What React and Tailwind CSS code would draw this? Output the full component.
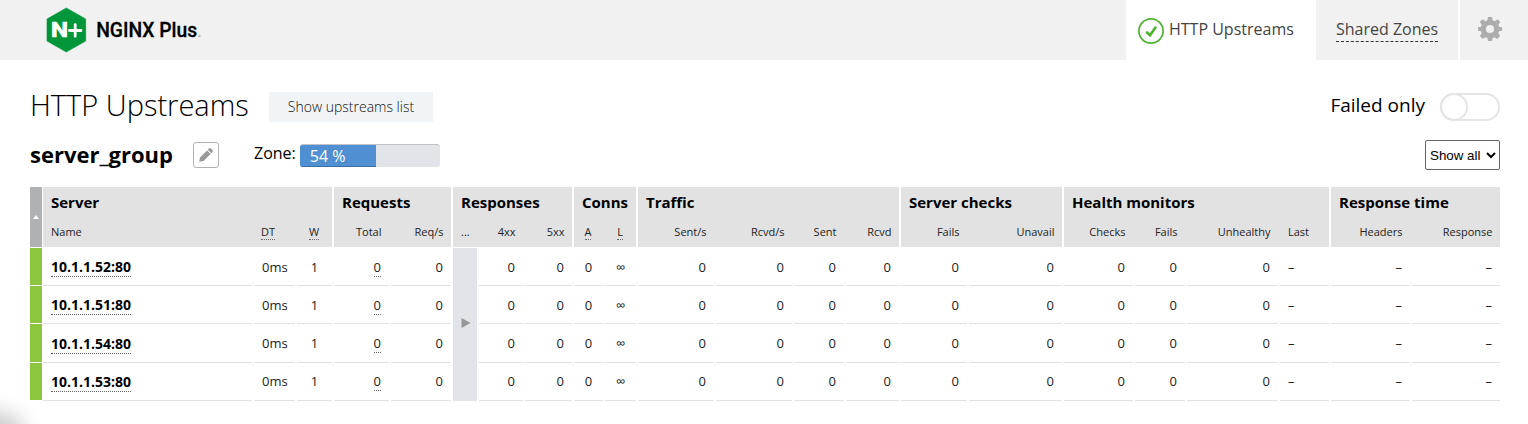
const groups = [
  { title: "Server", cols: [["Name", 209, "l"], ["DT", 41, "l", 1], ["W", 35, "c", 1]] },
  { title: "Requests", cols: [["Total", 55, "r"], ["Req/s", 60, "r"]] },
  { title: "Responses", cols: [["...", 24, "l"], ["4xx", 44, "r"], ["5xx", 47, "r"]] },
  { title: "Conns", cols: [["A", 29, "c", 1], ["L", 31, "c", 1]] },
  { title: "Traffic", cols: [["Sent/s", 76, "r"], ["Rcvd/s", 76, "r"], ["Sent", 50, "r"], ["Rcvd", 53, "r"]] },
  { title: "Server checks", cols: [["Fails", 66, "r"], ["Unavail", 93, "r"]] },
  { title: "Health monitors", cols: [["Checks", 69, "r"], ["Fails", 50, "r"], ["Unhealthy", 91, "r"], ["Last", 49, "l"]] },
  { title: "Response time", cols: [["Headers", 79, "r"], ["Response", 88, "r"]] },
];

const servers = ["10.1.1.52:80", "10.1.1.51:80", "10.1.1.54:80", "10.1.1.53:80"];

const rowHeights = ["h-[38px]", "h-[38px]", "h-[39px]", "h-[38px]"];
const textTops = ["pt-[10px]", "pt-[10px]", "pt-[10px]", "pt-[9px]"];
const nameTops = ["pt-[10px]", "pt-[10px]", "pt-[11px]", "pt-[10px]"];

const align = { l: "justify-start", r: "justify-end", c: "justify-center" };

const leftColumns = ["server", "0ms", "1", "total", "0"];
const rightColumns = ["0", "0", "0", "∞", "0", "0", "0", "0", "0", "0", "0", "0", "0", "–", "–", "–"];

const flatCols = groups.flatMap((g) => g.cols);
const leftDefs = flatCols.slice(0, 5);
const rightDefs = flatCols.slice(6);

function Cell({ def, value, server, row }) {
  return (
    <div
      className={`flex shrink-0 items-start border-b border-[#e2e2e2] ${value === "server" ? nameTops[row] : textTops[row]} ${def[2] === "c" ? "" : "px-2"} ${align[def[2]]}`}
      style={{ width: def[1] }}
    >
      {value === "server" ? (
        <span className="border-b border-dotted border-[#666] text-sm leading-[18px] font-bold text-black">{server}</span>
      ) : value === "total" ? (
        <span className="border-b border-dotted border-[#666] leading-[18px]">0</span>
      ) : (
        <span className="leading-[18px]">{value}</span>
      )}
    </div>
  );
}

function Table() {
  return (
    <div className="mt-[19px] w-[1470px]">
      <div className="flex h-[60px]">
        <div className="flex w-3 shrink-0 items-center justify-center bg-[#b0b1b2]">
          <svg width="6" height="4" viewBox="0 0 6 4"><path d="M0 4 3 0 6 4Z" fill="#fff" /></svg>
        </div>
        <div className="ml-px flex gap-0.5">
          {groups.map((g) => (
            <div key={g.title} className="bg-[#e2e2e2]">
              <div className="h-8 pt-[5px] pl-2 text-[15px] leading-5 font-bold text-black">
                <span className="whitespace-nowrap">{g.title}</span>
              </div>
              <div className="flex gap-0.5">
                {g.cols.map((c) => (
                  <div
                    key={c[0]}
                    className={`flex pt-[5px] text-[11px] leading-4 whitespace-nowrap text-[#222] ${c[2] === "c" ? "" : c[2] === "r" ? "pr-[7.5px]" : "pl-2"} ${align[c[2]]}`}
                    style={{ width: c[1] }}
                  >
                    <span className={c[3] ? "-ml-px border-b border-dotted border-[#666] leading-[15px]" : ""}>{c[0]}</span>
                  </div>
                ))}
              </div>
            </div>
          ))}
        </div>
      </div>
      <div className="mt-px flex text-[13px] text-[#222]">
        <div className="mr-0.5 flex flex-col">
          {servers.map((s, i) => (
            <div key={s} className={`flex ${rowHeights[i]}`}>
              <div className="mr-px w-3 border-b border-white bg-[#8cc63e]" />
              <div className="flex gap-0.5">
                {leftDefs.map((d, j) => (
                  <Cell key={j} def={d} value={leftColumns[j]} server={s} row={i} />
                ))}
              </div>
            </div>
          ))}
        </div>
        <div className="mr-0.5 flex w-6 items-center justify-center bg-[#e1e4e8]">
          <svg className="mb-[3px] ml-px" width="10" height="10" viewBox="0 0 10 10"><path d="M0.5 0v10L9.5 5Z" fill="#96989a" /></svg>
        </div>
        <div className="flex flex-col">
          {servers.map((s, i) => (
            <div key={s} className={`flex gap-0.5 ${rowHeights[i]}`}>
              {rightDefs.map((d, j) => (
                <Cell key={j} def={d} value={rightColumns[j]} row={i} />
              ))}
            </div>
          ))}
        </div>
      </div>
    </div>
  );
}

function Logo() {
  return (
    <svg className="ml-[46px]" width="160" height="60" viewBox="0 0 160 60">
      <path d="M20.3 8 39.7 19v22L20.3 52 1 41V19Z" fill="#009639" stroke="#009639" strokeWidth="0.6" strokeLinejoin="round" />
      <text x="5" y="37" fill="#fff" stroke="#fff" strokeWidth="0.7" fontFamily="Roboto, sans-serif" fontWeight="700" fontSize="20" textLength="17" lengthAdjust="spacingAndGlyphs">N</text>
      <path d="M23.5 30.5H35M29.2 24.7v11.6" stroke="#fff" strokeWidth="2.8" strokeLinecap="round" />
      <text x="50.2" y="37" fill="#000" stroke="#000" strokeWidth="0.3" fontFamily="Roboto, sans-serif" fontWeight="500" fontSize="20.5" textLength="101" lengthAdjust="spacingAndGlyphs">NGINX Plus</text>
      <circle cx="153.4" cy="36" r="1.3" fill="#bdbdbd" />
    </svg>
  );
}

export default function App() {
  return (
    <div className="relative h-[424px] w-[1528px] overflow-hidden bg-white font-['Open_Sans',sans-serif] text-black">
      <header className="flex h-[60px] bg-[#f1f1f1]">
        <Logo />
        <nav className="ml-auto flex">
          <div className="flex w-[190px] bg-white pl-3">
            <svg className="mt-[18px]" width="26" height="26" viewBox="0 0 26 26" fill="none" stroke="#4db32e">
              <circle cx="13" cy="13" r="12.1" strokeWidth="1.7" />
              <path d="M8.2 13.8 12 17.3 18 8.800" strokeWidth="2.6" />
            </svg>
            <span className="mt-[17px] ml-[5px] text-base leading-6 whitespace-nowrap text-[#444]">HTTP Upstreams</span>
          </div>
          <div className="w-[142px] pt-[17px] pl-5">
            <span className="inline-block border-b border-dashed border-[#333] text-base leading-[23px] whitespace-nowrap text-[#444]">Shared Zones</span>
          </div>
          <div className="flex w-[70px] border-l-2 border-white pt-[17px] pl-[18px]">
            <svg width="24" height="24" viewBox="0 0 24 24">
              <path fill="#adadad" fillRule="evenodd" d="M10 0h4l.6 3.300 2.200.9L19.600 2.200l2.800 2.800-2 2.700.6 2.100L24 10.300v3.400l-3 .6-.7 2 1.800 2.700-2.800 2.900-2.700-1.700-2 .8L14 24h-4l-.6-3-2-.8-2.700 1.700L1.900 19l1.800-2.700-.7-2-3-.6v-3.400l3-.5.7-2.100L1.700 5l2.800-2.800 2.800 2 2.100-.9ZM12 8a4 4 0 1 0 0 8 4 4 0 0 0 0-8Z" />
            </svg>
          </div>
        </nav>
      </header>

      <main className="w-[1500px] pl-[30px]">
        <div className="flex h-[66px] items-start">
          <h1 className="mt-[25px] w-[239px] text-[29px] leading-10 font-light whitespace-nowrap">HTTP Upstreams</h1>
          <button className="mt-8 h-[30px] w-[164px] bg-[#f1f4f7] text-sm font-light whitespace-nowrap text-[#111]">Show upstreams list</button>
          <span className="mt-8 ml-auto text-[19px] leading-[26px]">Failed only</span>
          <div className="mt-[33px] ml-[15px] h-7 w-[60px] rounded-full border-2 border-[#e5e5e5]">
            <div className="-mt-0.5 -ml-0.5 h-7 w-7 rounded-full border-2 border-[#e5e5e5]" />
          </div>
        </div>
        <div className="flex h-[42px] items-start">
          <h2 className="mt-[13px] w-[163px] text-[22px] leading-[30px] font-bold">server_group</h2>
          <button className="mt-4 flex h-[26px] w-[26px] items-center justify-center rounded-[3px] border border-[#b3b3b3]">
            <svg width="14" height="14" viewBox="0 0 14 14" fill="#999">
              <path d="M0.200 13.800 1 9.400 8 2.400 11.600 6 4.600 13ZM8.700 1.700 10 .5Q11 -.3 11.900.6L13.400 2.100Q14.300 3 13.500 4L12.300 5.300Z" />
            </svg>
          </button>
          <span className="mt-[15px] ml-[35px] text-base leading-6">Zone:</span>
          <div className="mt-[18px] ml-1 h-[23px] w-[140px] overflow-hidden rounded-[3px] border-t border-[#bfc3c8] bg-[#e1e4e8]">
            <div className="h-[22px] w-[76px] border-b border-[#3a6ea5] bg-[#5090d2] pl-[10px] text-base leading-[23px] text-white">54 %</div>
          </div>
          <select className="mt-[14px] ml-auto h-[30px] w-[75px] rounded-[2px] border border-[#666] bg-white font-['Liberation_Sans',sans-serif] text-[13.33px] text-black">
            <option>Show all</option>
          </select>
        </div>
        <Table />
      </main>
      <div className="absolute -bottom-9 -left-10 h-12 w-16 rounded-full bg-black/20 blur-[10px]" />
    </div>
  );
}
